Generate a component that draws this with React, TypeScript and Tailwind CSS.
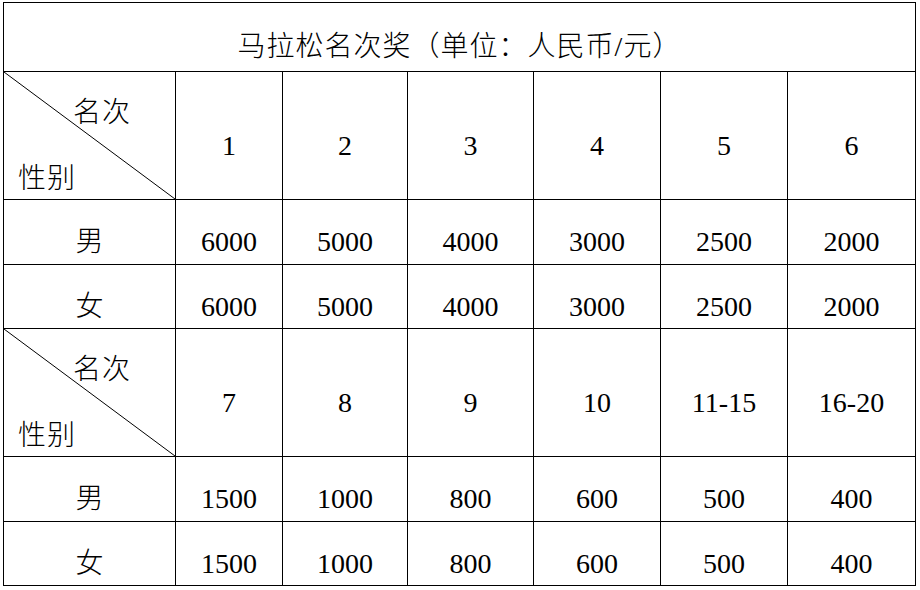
import React from 'react';

const ranks1 = ['1', '2', '3', '4', '5', '6'];
const ranks2 = ['7', '8', '9', '10', '11-15', '16-20'];
const prize1 = ['6000', '5000', '4000', '3000', '2500', '2000'];
const prize2 = ['1500', '1000', '800', '600', '500', '400'];

const cell = 'flex items-center justify-center border-r border-b border-black pt-5';

const DiagonalHeader: React.FC = () => (
  <div className="relative flex flex-col justify-between border-r border-b border-black px-[14px] pt-[27px] pb-[6px]">
    <svg className="absolute inset-0 h-full w-full" preserveAspectRatio="none" viewBox="0 0 100 100">
      <line x1="0" y1="0" x2="100" y2="100" stroke="#000" strokeWidth="1" vectorEffect="non-scaling-stroke" />
    </svg>
    <span className="relative self-end pr-[30px] font-extralight tracking-[1px]">名次</span>
    <span className="relative self-start font-extralight tracking-[1px]">性别</span>
  </div>
);

const Block: React.FC<{ ranks: string[]; prizes: string[] }> = ({ ranks, prizes }) => (
  <>
    <DiagonalHeader />
    {ranks.map((r) => (
      <div key={r} className={cell}>{r}</div>
    ))}
    <div className={cell}><span className="font-extralight">男</span></div>
    {prizes.map((p, i) => (
      <div key={'m' + i} className={cell}>{p}</div>
    ))}
    <div className={cell}><span className="font-extralight">女</span></div>
    {prizes.map((p, i) => (
      <div key={'f' + i} className={cell}>{p}</div>
    ))}
  </>
);

export default function App() {
  return (
    <div className="h-[590px] w-[920px] bg-white pl-[3px] pt-[2px]">
      <div
        className="grid w-[913px] grid-cols-[172px_107px_125px_126px_127px_127px_128px] grid-rows-[69px_128px_65px_64px_128px_65px_64px] border-l border-t border-black text-[28px] leading-none text-black"
        style={{ fontFamily: '"Liberation Serif", "Noto Sans CJK SC", serif' }}
      >
        <div className={cell + ' col-span-7'}>
          <span className="font-light tracking-[1px]">马拉松名次奖（单位：人民币/元）</span>
        </div>
        <Block ranks={ranks1} prizes={prize1} />
        <Block ranks={ranks2} prizes={prize2} />
      </div>
    </div>
  );
}
